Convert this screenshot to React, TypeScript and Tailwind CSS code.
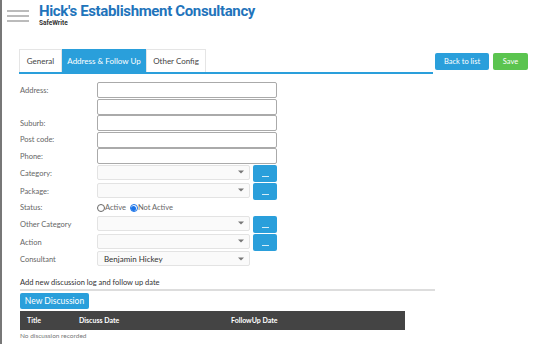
import React from 'react';

function Caret() {
  return <span className="absolute right-[5px] top-1/2 -translate-y-1/2 border-x-[3px] border-t-[3px] border-x-transparent border-t-[#777]" />;
}

function Row({ label, children, h = 'h-[16.5px]' }: { label: string; children?: React.ReactNode; h?: string }) {
  return (
    <div className={`flex items-center ${h}`}>
      <div className="w-[77px] text-[7.5px] text-[#666]">{label}</div>
      {children}
    </div>
  );
}

function TextInput() {
  return <div className="h-[16px] w-[180px] rounded-[2px] border border-[#aaa] bg-white" />;
}

function Select({ value, w = 'w-[153px]' }: { value?: string; w?: string }) {
  return (
    <div className={`relative flex h-[15px] ${w} items-center self-start rounded-[2px] border border-[#e3e3e3] bg-[#fafafa] px-[6px] text-[8px] text-[#333]`}>
      {value}
      <Caret />
    </div>
  );
}

function DotsButton() {
  return (
    <div className="ml-[3px] flex h-[17px] w-[24px] items-end justify-center self-start rounded-[2px] bg-[#2a9fdb] pb-[5px]">
      <span className="h-[1px] w-[7px] bg-white/80" />
    </div>
  );
}

export default function App() {
  return (
    <div className="relative h-[344px] w-[538px] overflow-hidden bg-white" style={{ fontFamily: 'Lato, "Open Sans", sans-serif' }}>
      <div className="absolute left-0 top-0 h-full w-[2px] bg-[#777]" />

      <div className="flex items-start pl-[7px] pt-[2px]">
        <div className="mt-[8px] flex w-[22px] flex-col gap-[3px]">
          <span className="h-[2px] w-full bg-[#bbb]" />
          <span className="h-[2px] w-full bg-[#bbb]" />
          <span className="h-[2px] w-full bg-[#bbb]" />
        </div>
        <div className="ml-[10px]">
          <div className="text-[15px] font-bold leading-[18px] tracking-[-0.35px] text-[#1f74bb]" style={{ fontFamily: 'Roboto, sans-serif' }}>
            Hick's Establishment Consultancy
          </div>
          <div className="text-[6.5px] font-bold leading-[7px] text-[#333]" style={{ fontFamily: 'Roboto, sans-serif' }}>SafeWrite</div>
        </div>
      </div>

      <div className="ml-[19px] mt-[22px] flex items-start">
        <div className="flex w-[414px] border-b-[2px] border-[#2a9fdb]">
          <div className="flex h-[23px] w-[43px] items-center justify-center border border-b-0 border-[#e5e5e5] bg-white text-[8px] text-[#444]">General</div>
          <div className="flex h-[23px] w-[84px] items-center justify-center bg-[#2a9fdb] text-[8px] text-white">Address &amp; Follow Up</div>
          <div className="flex h-[23px] w-[60px] items-center justify-center border border-b-0 border-[#e5e5e5] bg-white text-[8px] text-[#444]">Other Config</div>
        </div>
        <div className="ml-[2px] mt-[4px] flex h-[17px] w-[54px] items-center justify-center rounded-[2px] bg-[#2a9fdb] text-[7.5px] text-white">Back to list</div>
        <div className="ml-[4px] mt-[4px] flex h-[17px] w-[35px] items-center justify-center rounded-[2px] bg-[#5bc44f] text-[7.5px] text-white">Save</div>
      </div>

      <div className="ml-[20px] mt-[8px] flex flex-col">
        <Row label="Address:"><TextInput /></Row>
        <Row label=""><TextInput /></Row>
        <Row label="Suburb:"><TextInput /></Row>
        <Row label="Post code:"><TextInput /></Row>
        <Row label="Phone:"><TextInput /></Row>
        <Row label="Category:" h="h-[18px]"><Select /><DotsButton /></Row>
        <Row label="Package:" h="h-[18px]"><Select /><DotsButton /></Row>
        <Row label="Status:" h="h-[15px]">
          <div className="flex items-center text-[7.5px] text-[#666]">
            <span className="h-[8px] w-[8px] rounded-full border border-[#666] bg-white" />
            <span className="mr-[4px]">Active</span>
            <span className="flex h-[8px] w-[8px] items-center justify-center rounded-full border border-[#1a73e8]">
              <span className="h-[5px] w-[5px] rounded-full bg-[#1a73e8]" />
            </span>
            <span>Not Active</span>
          </div>
        </Row>
        <Row label="Other Category" h="h-[18px]"><Select /><DotsButton /></Row>
        <Row label="Action" h="h-[17.5px]"><Select /><DotsButton /></Row>
        <Row label="Consultant" h="h-[17px]"><Select value="Benjamin Hickey" /></Row>

        <div className="mt-[10px] w-[415px] border-b-[2px] border-[#ddd] pb-[2px] text-[7.5px] leading-[9px] text-[#333]">
          Add new discussion log and follow up date
        </div>
        <div className="mt-[2px] flex h-[16px] w-[69px] items-center justify-center rounded-[2px] bg-[#2a9fdb] text-[8.5px] text-white">New Discussion</div>
        <div className="mt-[2px] flex h-[19px] w-[385px] items-center bg-[#444] text-[7px] font-bold text-white">
          <span className="w-[59px] pl-[7px]">Title</span>
          <span className="w-[152px]">Discuss Date</span>
          <span>FollowUp Date</span>
        </div>
        <div className="mt-[1px] text-[6.5px] text-[#777]">No discussion recorded</div>
      </div>
    </div>
  );
}
